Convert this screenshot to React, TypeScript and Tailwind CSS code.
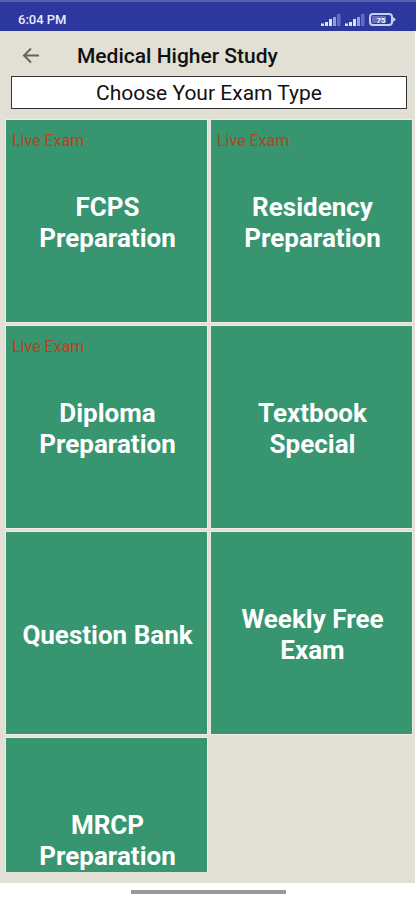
import React from 'react';

interface ExamType {
  id: string;
  title: string;
  live: boolean;
}

const EXAM_TYPES: ExamType[] = [
  { id: 'fcps', title: 'FCPS Preparation', live: true },
  { id: 'residency', title: 'Residency Preparation', live: true },
  { id: 'diploma', title: 'Diploma Preparation', live: true },
  { id: 'textbook', title: 'Textbook Special', live: false },
  { id: 'question-bank', title: 'Question Bank', live: false },
  { id: 'weekly', title: 'Weekly Free Exam', live: false },
  { id: 'mrcp', title: 'MRCP Preparation', live: false },
];

// Signal strength, the last bars are dimmed
function SignalIcon() {
  return (
    <svg viewBox="0 0 20 13" className="w-5 h-[13px]" fill="#dfe3fa" aria-hidden="true">
      <rect x="0" y="10.5" width="3" height="2.5" />
      <rect x="4" y="9" width="3" height="4" />
      <rect x="8" y="6" width="3" height="7" />
      <rect x="12" y="4" width="3" height="9" fillOpacity="0.6" />
      <rect x="16" y="1" width="3.5" height="12" fillOpacity="0.3" />
    </svg>
  );
}

function BatteryIcon() {
  return (
    <svg viewBox="0 0 27 13" className="w-[27px] h-[13px]" aria-hidden="true">
      <rect x="1" y="1" width="22" height="11" rx="3" fill="#2c389e" stroke="#c9cff2" strokeWidth="2" />
      <rect x="3" y="3" width="14" height="7" rx="1" fill="#6670c2" />
      <path d="M24 4l3 2.5L24 9z" fill="#c9cff2" />
      <text x="12" y="9.5" fontSize="8" fontWeight="700" textAnchor="middle" fill="#eef0ff">
        75
      </text>
    </svg>
  );
}

function BackArrowIcon() {
  return (
    <svg viewBox="0 0 18 16" className="w-[18px] h-4" fill="none" stroke="#67655f" strokeWidth="2" aria-hidden="true">
      <path d="M17 7.5H2M9 0.5L2 7.5l7 7" />
    </svg>
  );
}

function ExamTile({ exam }: { exam: ExamType }) {
  return (
    <button
      type="button"
      className="relative h-[202px] flex items-center justify-center pl-[10px] pr-2 pt-1 bg-[#37956f] outline outline-1 outline-[#eeece4] text-white text-[26px] leading-[31px] font-bold text-center cursor-pointer"
    >
      {exam.live && (
        <span className="absolute left-[6px] top-[11px] text-base leading-5 font-normal text-[#b5441f]">
          Live Exam
        </span>
      )}
      <span className="max-w-44">{exam.title}</span>
    </button>
  );
}

export default function App() {
  return (
    <div className="h-screen flex flex-col bg-white font-[Roboto,sans-serif]">
      {/* Status bar */}
      <div className="h-[31px] shrink-0 flex items-center justify-between pl-[18px] pr-5 pt-[6px] mr-px bg-[#2d389f] border-t-2 border-[#5560b0]">
        <span className="text-[13px] leading-4 font-medium text-[#e9ebfb]">6:04 PM</span>
        <div className="flex items-center gap-1">
          <SignalIcon />
          <SignalIcon />
          <BatteryIcon />
        </div>
      </div>

      <main className="flex-1 min-h-0 flex flex-col mr-[2px] bg-[#e2dfd4]">
        <header className="h-[45px] shrink-0 flex items-center pl-[22px] pt-1">
          <button type="button" aria-label="Back" className="cursor-pointer">
            <BackArrowIcon />
          </button>
          <h1 className="ml-[37px] text-[21px] leading-7 font-medium text-[#111111]">Medical Higher Study</h1>
        </header>

        <h2 className="shrink-0 ml-[11px] mr-2 h-[33px] flex items-center justify-center bg-white border border-[#333333] text-[21px] leading-7 text-[#111111]">
          Choose Your Exam Type
        </h2>

        <div className="flex-1 min-h-0 mt-[10px] mb-[11px] overflow-hidden">
          <div className="grid grid-cols-2 gap-1 pl-[6px] pr-[3px] pt-px">
            {EXAM_TYPES.map((exam) => (
              <ExamTile key={exam.id} exam={exam} />
            ))}
          </div>
        </div>
      </main>

      {/* Gesture bar */}
      <footer className="h-[17px] shrink-0 flex justify-center pt-[7px]">
        <div className="w-[37%] h-1 bg-[#999999]" />
      </footer>
    </div>
  );
}
